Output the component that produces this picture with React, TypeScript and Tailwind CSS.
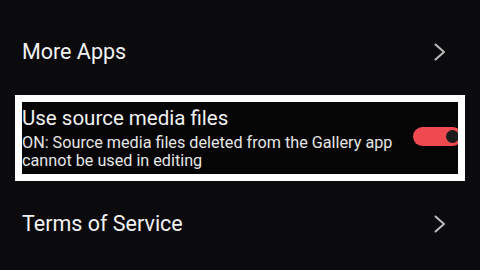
import React from "react"

function Chevron() {
  return (
    <svg width="12" height="18" viewBox="0 0 12 18" className="shrink-0">
      <polyline points="1.5,1.5 10,9 1.5,16.5" fill="none" stroke="#bdbdbd" strokeWidth="2" strokeLinecap="round" strokeLinejoin="round" />
    </svg>
  )
}

export default function App() {
  return (
    <div className="flex h-[270px] w-[480px] flex-col bg-[#0b0b0e] font-['Roboto',sans-serif] text-[#f2f2f2]">
      <div className="flex h-[95px] items-center justify-between pt-[9px] pr-[34px] pl-[22px]">
        <span className="text-[21.5px] leading-none">More Apps</span>
        <Chevron />
      </div>

      <div className="mx-[15px] h-[86px] border-[7px] border-white bg-[#050505]">
        <div className="flex h-full items-start overflow-hidden">
          <div className="flex-1 pt-[4px]">
            <p className="text-[20.5px] leading-[24px]">Use source media files</p>
            <p className="mt-[4px] text-[16.2px] leading-[18px] text-[#e6e6e6]">
              <span className="block">ON: Source media files deleted from the Gallery app</span>
              <span className="block">cannot be used in editing</span>
            </p>
          </div>
          <div className="mt-[25px] -mr-[4px] flex h-[19px] w-[49px] shrink-0 items-center justify-end rounded-full bg-[#ef4a4f] pr-[3px]">
            <div className="h-[13px] w-[13px] rounded-full bg-[#1b1b1d]" />
          </div>
        </div>
      </div>

      <div className="flex flex-1 items-center justify-between pr-[34px] pb-[3px] pl-[22px]">
        <span className="text-[21.5px] leading-none">Terms of Service</span>
        <Chevron />
      </div>
    </div>
  )
}
